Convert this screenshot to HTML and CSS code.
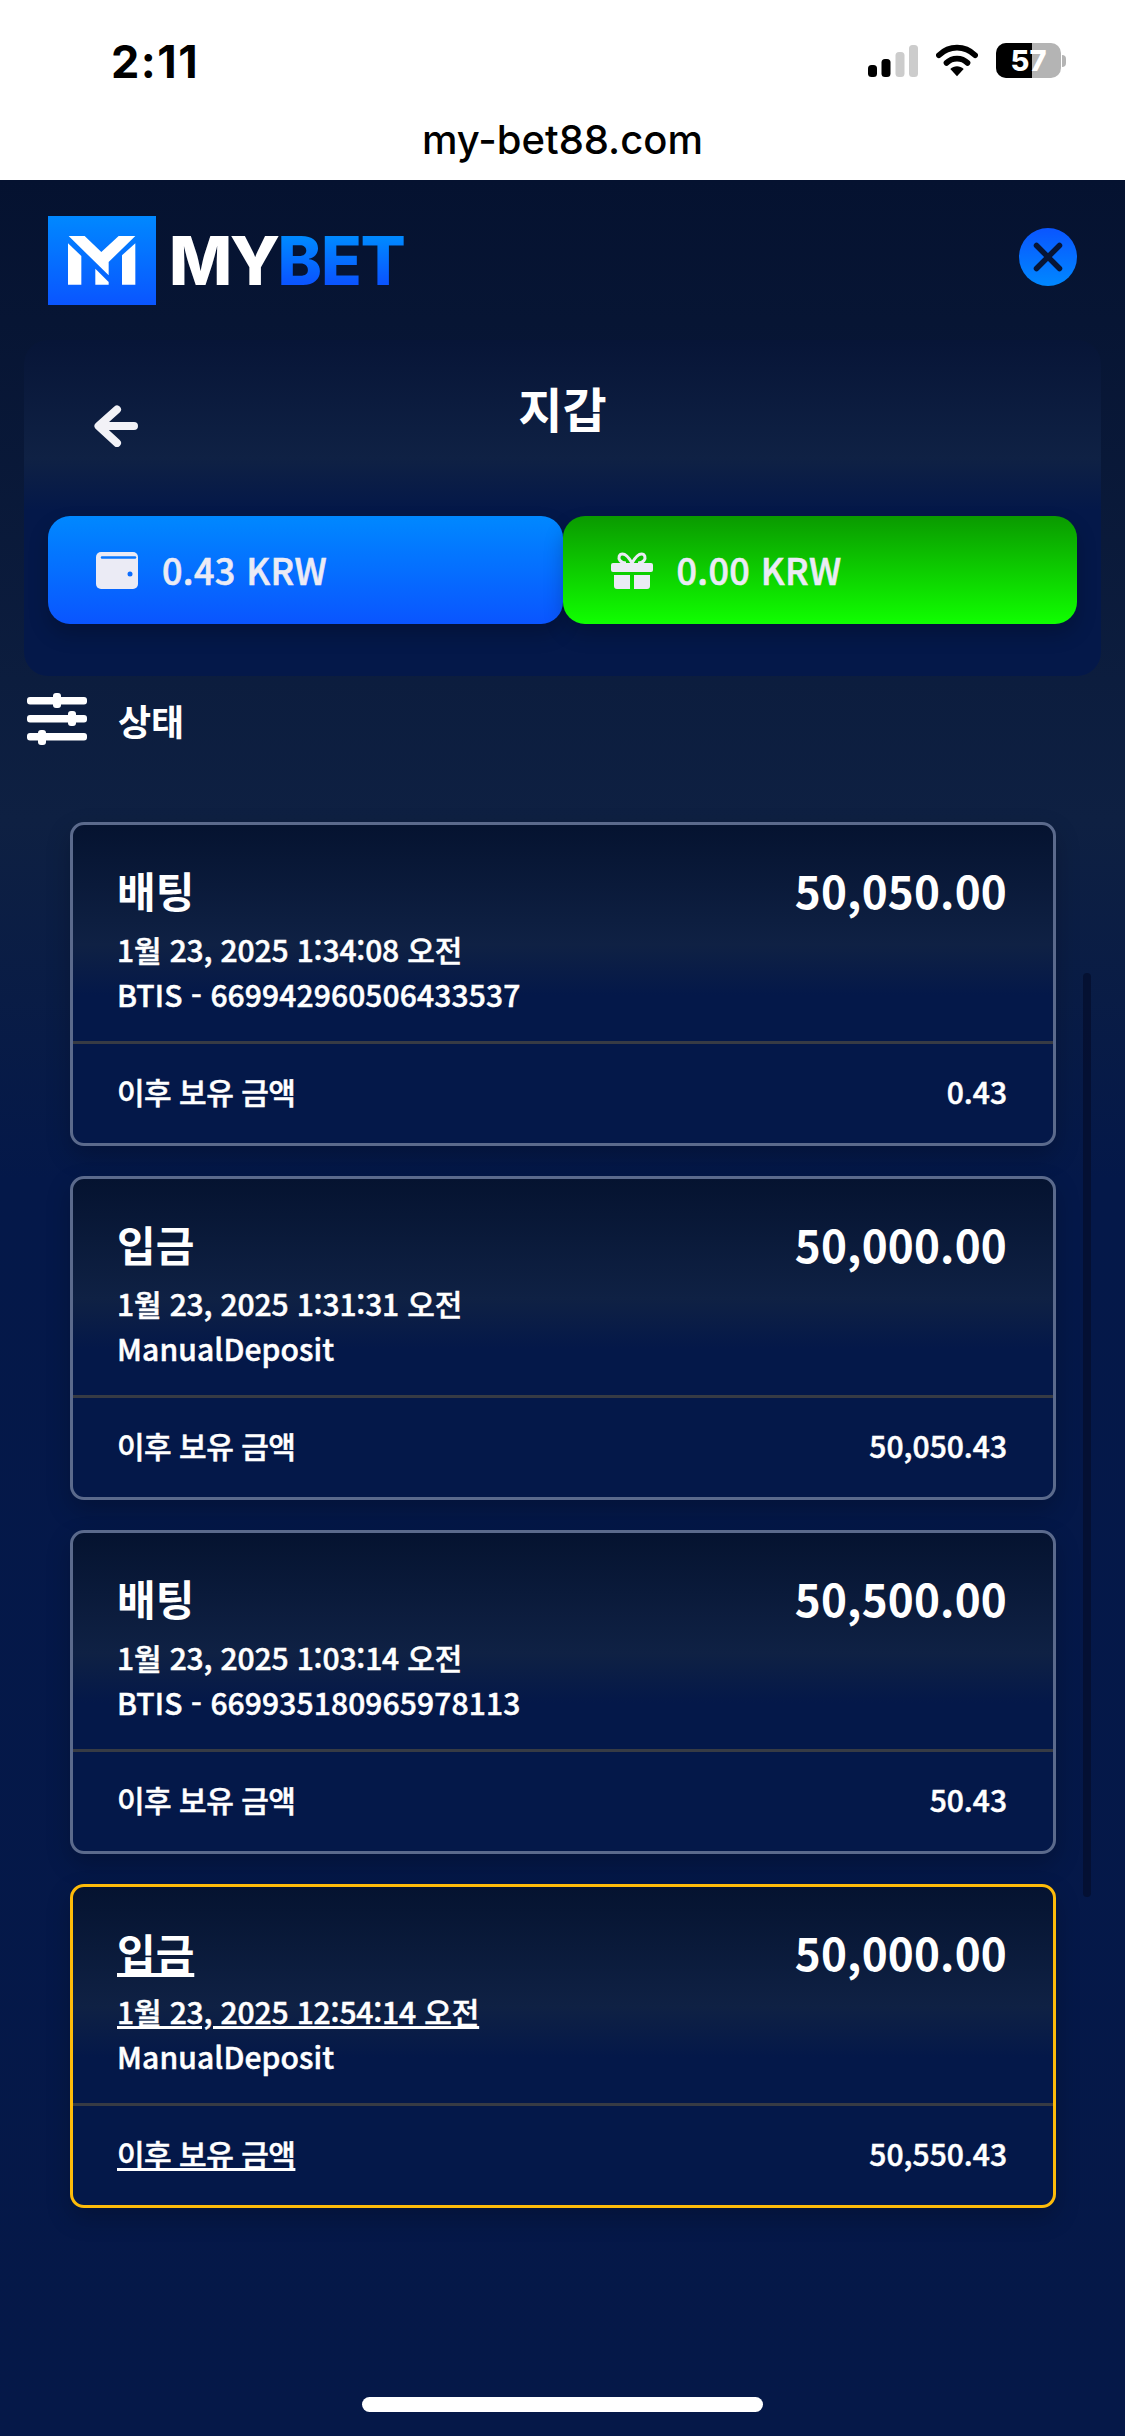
FILE: index.html
```html
<!DOCTYPE html>
<html lang="ko">
<head>
<meta charset="utf-8">
<title>지갑</title>
<link rel="stylesheet" href="styles.css">
</head>
<body>
<div class="status">
  <span class="time">2:11</span>
  <div class="status-icons">
    <svg width="50" height="32" viewBox="0 0 50 32"><rect x="0" y="20" width="9" height="12" rx="3.500" fill="#000"/><rect x="13.500" y="14" width="9" height="18" rx="3.500" fill="#000"/><rect x="27.500" y="7" width="9" height="25" rx="3.500" fill="#ccc"/><rect x="41" y="0" width="9" height="32" rx="3.500" fill="#ccc"/></svg>
    <svg width="42" height="33" viewBox="0 0 44 34"><path d="M3 11.500C14 1 30 1 41 11.500" fill="none" stroke="#000" stroke-width="6" stroke-linecap="round"/><path d="M11 19.500C17 13.500 27 13.500 33 19.500" fill="none" stroke="#000" stroke-width="6" stroke-linecap="round"/><path d="M15 26 22 33.500 29 26C25 22 19 22 15 26Z" fill="#000"/></svg>
    <div class="battery"><div class="battery-fill"></div><span class="battery-num">57</span><div class="battery-cap"></div></div>
  </div>
</div>
<div class="urlbar">my-bet88.com</div>
<main class="app">
  <header class="top">
    <div class="brand">
      <svg class="brand-mark" width="108" height="89" viewBox="0 0 324 267"><path d="M62 60H110L160 108 212 60H262L182 138V178Z" fill="#fff"/><path d="M60 82 100 120V206H60Z" fill="#fff"/><path d="M262 82V206H222V118Z" fill="#fff"/><path d="M142 158 182 198V206H142Z" fill="#fff"/></svg>
      <div class="brand-name"><span class="brand-my">MY</span><span class="brand-bet">BET</span></div>
    </div>
    <button class="close" type="button" aria-label="닫기">
      <svg width="34" height="34" viewBox="0 0 34 34"><path d="M5.500 5.500 28.500 28.500M28.500 5.500 5.500 28.500" stroke="#071536" stroke-width="5.500" stroke-linecap="round"/></svg>
    </button>
  </header>
  <section class="panel">
    <div class="panel-head">
      <svg class="back" width="46" height="42" viewBox="0 0 46 42"><path d="M24 4.500 5.500 21 24 38M6 21H41" fill="none" stroke="#f2f2f7" stroke-width="8" stroke-linecap="round" stroke-linejoin="round"/></svg>
      <h1 class="title">지갑</h1>
    </div>
    <div class="balances">
      <div class="balance balance-blue">
        <svg width="42" height="37" viewBox="0 0 42 37"><rect x="0" y="0" width="42" height="37" rx="5" fill="#ebebf5"/><path d="M6 5.500H39" stroke="#0a78ff" stroke-width="2.500" stroke-linecap="round"/><circle cx="34" cy="22" r="2.500" fill="#0a6cff"/></svg>
        <span class="balance-text">0.43 KRW</span>
      </div>
      <div class="balance balance-green">
        <svg width="42" height="37" viewBox="0 0 42 37"><path d="M2 11H40A2 2 0 0 1 42 13V18A2 2 0 0 1 40 20H2A2 2 0 0 1 0 18V13A2 2 0 0 1 2 11ZM3 23H19V37H6A3 3 0 0 1 3 34ZM23 23H39V34A3 3 0 0 1 36 37H23Z" fill="#ebebf5"/><path d="M21 11C17 4 14 2 11.500 2 8 2 7 6 9 8.500 10.500 10.500 13 11 15 11M21 11C25 4 28 2 30.500 2 34 2 35 6 33 8.500 31.500 10.500 29 11 27 11" fill="none" stroke="#ebebf5" stroke-width="3"/></svg>
        <span class="balance-text">0.00 KRW</span>
      </div>
    </div>
  </section>
  <div class="filter">
    <svg width="60" height="52" viewBox="0 0 60 52"><g fill="#fff"><rect x="0" y="4" width="60" height="7.500" rx="3"/><rect x="26" y="0" width="8" height="15" rx="3"/><rect x="0" y="22" width="60" height="7.500" rx="3"/><rect x="41" y="18" width="8" height="15" rx="3"/><rect x="0" y="40" width="60" height="7.500" rx="3"/><rect x="11" y="37" width="8" height="15" rx="3"/></g></svg>
    <span class="filter-label">상태</span>
  </div>
  <div class="cards">
    <article class="card">
      <div class="card-main">
        <div class="card-row"><span class="card-type">배팅</span><span class="card-amount">50,050.00</span></div>
        <div class="card-line card-date">1월 23, 2025 1:34:08 오전</div>
        <div class="card-line card-ref">BTIS - 669942960506433537</div>
      </div>
      <div class="card-foot"><span class="foot-label">이후 보유 금액</span><span>0.43</span></div>
    </article>
    <article class="card">
      <div class="card-main">
        <div class="card-row"><span class="card-type">입금</span><span class="card-amount">50,000.00</span></div>
        <div class="card-line card-date">1월 23, 2025 1:31:31 오전</div>
        <div class="card-line card-ref">ManualDeposit</div>
      </div>
      <div class="card-foot"><span class="foot-label">이후 보유 금액</span><span>50,050.43</span></div>
    </article>
    <article class="card">
      <div class="card-main">
        <div class="card-row"><span class="card-type">배팅</span><span class="card-amount">50,500.00</span></div>
        <div class="card-line card-date">1월 23, 2025 1:03:14 오전</div>
        <div class="card-line card-ref">BTIS - 669935180965978113</div>
      </div>
      <div class="card-foot"><span class="foot-label">이후 보유 금액</span><span>50.43</span></div>
    </article>
    <article class="card card-active">
      <div class="card-main">
        <div class="card-row"><span class="card-type link">입금</span><span class="card-amount">50,000.00</span></div>
        <div class="card-line card-date"><span class="link">1월 23, 2025 12:54:14 오전</span></div>
        <div class="card-line card-ref">ManualDeposit</div>
      </div>
      <div class="card-foot"><span class="foot-label link">이후 보유 금액</span><span>50,550.43</span></div>
    </article>
  </div>
  <div class="scrollbar"></div>
  <div class="home-indicator"></div>
</main>
</body>
</html>
```
FILE: styles.css
```css
* { box-sizing: border-box; }
html, body { margin: 0; padding: 0; }
body {
  width: 1125px;
  height: 2436px;
  overflow: hidden;
  background: #fff;
  font-family: "Noto Sans CJK KR", "Noto Sans", sans-serif;
  color: #fff;
}
.status {
  height: 116px;
  padding: 38px 64px 0 111px;
  display: flex;
  justify-content: space-between;
  align-items: flex-start;
  color: #000;
}
.time {
  font-family: Inter, "Liberation Sans", sans-serif;
  font-weight: 700;
  font-size: 45px;
  line-height: 48px;
  letter-spacing: 1.5px;
}
.status-icons {
  display: flex;
  align-items: center;
  gap: 18px;
  margin-top: 5px;
}
.battery {
  position: relative;
  width: 65px;
  height: 35px;
  border-radius: 10px;
  background: #b4b4b4;
  display: flex;
  align-items: center;
  justify-content: center;
}
.battery-fill {
  position: absolute;
  inset: 0 29px 0 0;
  background: #000;
  border-radius: 10px 0 0 10px;
}
.battery-num {
  position: relative;
  font-family: Inter, "Liberation Sans", sans-serif;
  font-weight: 800;
  font-size: 29px;
  line-height: 35px;
  color: #fff;
}
.battery-cap {
  position: absolute;
  right: -5px;
  top: 12px;
  width: 4px;
  height: 12px;
  background: #b4b4b4;
  border-radius: 0 4px 4px 0;
}
.urlbar {
  height: 64px;
  text-align: center;
  font-family: Inter, "Liberation Sans", sans-serif;
  font-weight: 500;
  font-size: 40px;
  line-height: 48px;
  color: #000;
}
.app {
  position: relative;
  height: 2256px;
  background: linear-gradient(180deg, #051230 0, #0e2042 640px, #041849 1000px, #051848 100%);
}
.top {
  height: 160px;
  padding: 36px 48px 0;
  display: flex;
  justify-content: space-between;
  align-items: flex-start;
}
.brand { display: flex; align-items: flex-start; gap: 14px; }
.brand-mark {
  display: block;
  background: linear-gradient(180deg, #0088ff, #0a55ff);
}
.brand-name {
  font-family: Inter, "Liberation Sans", sans-serif;
  font-weight: 800;
  font-size: 67px;
  line-height: 89px;
  display: flex;
  margin-left: -1px;
}
.brand-my { letter-spacing: -2.5px; }
.brand-bet {
  letter-spacing: -1.2px;
  background: linear-gradient(180deg, #0088ff 25%, #0a55ff 75%);
  -webkit-background-clip: text;
  background-clip: text;
  color: transparent;
}
.close {
  width: 58px;
  height: 58px;
  margin: 12px 0 0;
  padding: 0;
  border: 0;
  border-radius: 50%;
  background: linear-gradient(180deg, #0a55ff, #0088ff);
  display: flex;
  align-items: center;
  justify-content: center;
}
.panel {
  margin: 0 24px;
  height: 336px;
  padding: 20px 24px 0;
  border-radius: 24px;
  background: linear-gradient(180deg, #071537 0, #0f2144 118px, #041849 170px, #041849 100%);
}
.panel-head {
  height: 156px;
  position: relative;
  text-align: center;
}
.back { position: absolute; left: 45px; top: 45px; }
.title {
  margin: 0;
  font-size: 48px;
  font-weight: 700;
  line-height: 72px;
  padding-top: 11px;
}
.balances { display: flex; }
.balance {
  flex: 1;
  height: 108px;
  padding: 0 0 0 48px;
  border-radius: 22px;
  display: flex;
  align-items: center;
  gap: 24px;
  color: #ebebf5;
  font-size: 36px;
  font-weight: 500;
  box-shadow: 0 10px 20px rgba(0, 0, 0, .22);
}
.balance-text {
  -webkit-text-stroke: .6px #ebebf5;
  letter-spacing: .35px;
  margin-top: -2px;
}
.balance-blue { background: linear-gradient(180deg, #0088ff, #0a55ff); }
.balance-green { background: linear-gradient(180deg, #0a9a00, #10ff00); }
.filter {
  display: flex;
  align-items: center;
  gap: 31px;
  padding: 0 0 0 27px;
  height: 86px;
}
.filter-label {
  font-size: 36px;
  font-weight: 700;
  margin-top: 1px;
}
.cards {
  margin: 60px 69px 0 70px;
  display: flex;
  flex-direction: column;
  gap: 30px;
}
.card {
  height: 324px;
  border: 3px solid #5b6a8c;
  border-radius: 14px;
  background: linear-gradient(180deg, #051330 0, #0f2144 120px, #041849 170px, #041849 100%);
  box-shadow: 0 10px 24px rgba(0, 0, 0, .22);
  display: flex;
  flex-direction: column;
}
.card-active {
  border-color: #fdbb0a;
}
.card-main {
  height: 219px;
  padding: 27px 46px 0 44px;
  border-bottom: 3px solid #373b44;
}
.card-row {
  display: flex;
  justify-content: space-between;
  align-items: center;
  height: 75px;
}
.card-type { font-size: 42px; font-weight: 700; line-height: 58px; }
.card-amount { font-size: 44px; font-weight: 700; line-height: 58px; letter-spacing: .2px; }
.card-line {
  font-size: 30px;
  font-weight: 500;
  line-height: 45px;
  -webkit-text-stroke: .5px #fff;
}
.card-date { letter-spacing: -.15px; }
.card-ref { letter-spacing: .12px; }
.card-foot {
  flex: 1;
  padding: 0 46px 5px 44px;
  display: flex;
  justify-content: space-between;
  align-items: center;
  font-size: 30px;
  font-weight: 500;
  -webkit-text-stroke: .5px #fff;
}
.foot-label { letter-spacing: -.5px; }
.link { text-decoration: underline; }
.scrollbar {
  position: absolute;
  left: 1083px;
  top: 793px;
  width: 8px;
  height: 924px;
  border-radius: 4px;
  background: rgba(4, 14, 44, .75);
}
.home-indicator {
  position: absolute;
  left: 362px;
  top: 2217px;
  width: 401px;
  height: 15px;
  border-radius: 8px;
  background: #fff;
}
```
